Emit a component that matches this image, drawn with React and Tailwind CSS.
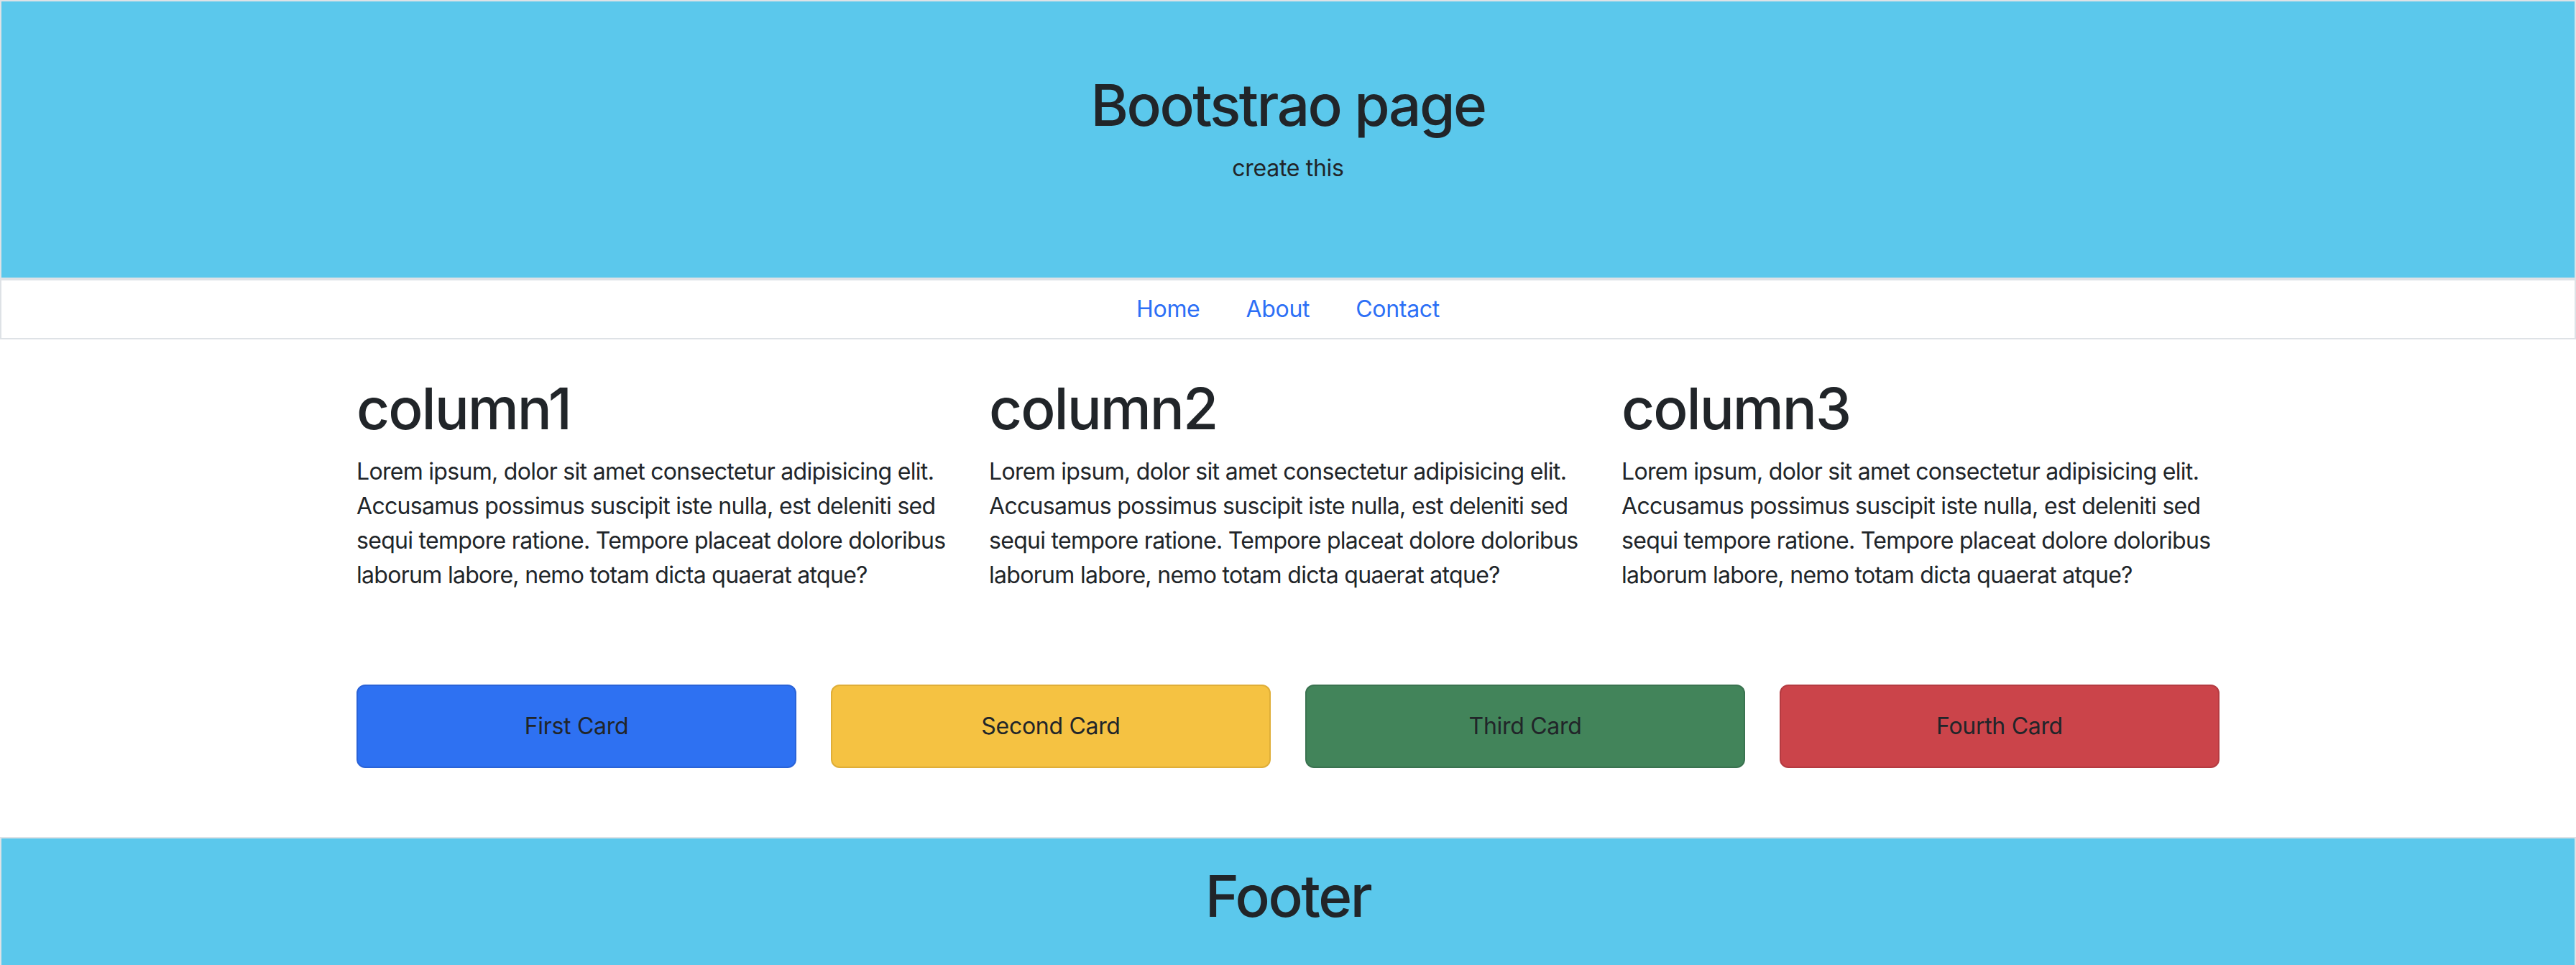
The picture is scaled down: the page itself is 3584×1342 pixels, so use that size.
export default function App() {
  const lorem = [
    "Lorem ipsum, dolor sit amet consectetur adipisicing elit.",
    "Accusamus possimus suscipit iste nulla, est deleniti sed",
    "sequi tempore ratione. Tempore placeat dolore doloribus",
    "laborum labore, nemo totam dicta quaerat atque?",
  ];
  const cols = ["column1", "column2", "column3"];
  const cards = [
    { t: "First Card", c: "bg-[#2e71f2] border-[#2a63d8]" },
    { t: "Second Card", c: "bg-[#f5c242] border-[#dfae38]" },
    { t: "Third Card", c: "bg-[#42845a] border-[#3a7350]" },
    { t: "Fourth Card", c: "bg-[#cb444a] border-[#b53b41]" },
  ];
  return (
    <div
      className="bg-white text-[#212529]"
      style={{ fontFamily: "Inter, 'Noto Sans', sans-serif" }}
    >
      <header className="border-2 border-[#dee2e6] bg-[#5bc8ec] py-[96px] text-center">
        <h1 className="text-[80px] leading-[96px] font-medium mb-[16px] tracking-[-2.5px]">
          Bootstrao page
        </h1>
        <p className="text-[32px] leading-[48px] mb-[32px] tracking-[-0.3px]">create this</p>
      </header>
      <nav className="border-2 border-[#dee2e6] flex justify-center items-center">
        {["Home", "About", "Contact"].map((l) => (
          <a
            key={l}
            href="#"
            className="px-[32px] py-[16px] text-[32px] leading-[48px] text-[#2c6ff6] tracking-[-0.3px]"
          >
            {l}
          </a>
        ))}
      </nav>
      <main className="w-[2640px] mx-auto">
        <div className="grid grid-cols-3 mt-[48px]">
          {cols.map((c) => (
            <div key={c} className="px-[24px]">
              <h1 className="text-[80px] leading-[96px] font-medium mb-[16px] tracking-[-2px]">
                {c}
              </h1>
              <p className="text-[32px] leading-[48px] mb-[32px] tracking-[-0.7px] whitespace-nowrap">
                {lorem.map((line, i) => (
                  <span key={i} className="block">
                    {line}
                  </span>
                ))}
              </p>
            </div>
          ))}
        </div>
        <div className="grid grid-cols-4 mt-[96px] mb-[96px]">
          {cards.map((k) => (
            <div key={k.t} className="px-[24px]">
              <div
                className={`border-2 rounded-[12px] p-[32px] text-center text-[32px] leading-[48px] tracking-[-0.3px] ${k.c}`}
              >
                {k.t}
              </div>
            </div>
          ))}
        </div>
      </main>
      <footer className="border-2 border-[#dee2e6] bg-[#5bc8ec] p-[32px] text-center">
        <h1 className="text-[80px] leading-[96px] font-medium mb-[16px] tracking-[-2.5px]">
          Footer
        </h1>
      </footer>
    </div>
  );
}
